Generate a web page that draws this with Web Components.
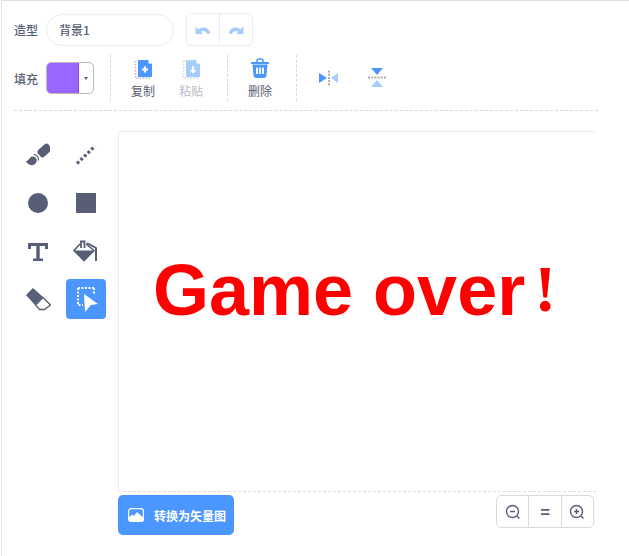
<!DOCTYPE html>
<html lang="zh">
<head>
<meta charset="utf-8">
<title>造型</title>
<style>
  body { margin: 0; background: #fff; font-family: "Noto Sans CJK SC", "Liberation Sans", sans-serif; color: #575e75; }
</style>
</head>
<body>
<paint-editor>
  <name-row slot="name" label="造型" value="背景1"></name-row>
  <edit-bar slot="bar"></edit-bar>
  <tool-box slot="tools"></tool-box>
  <bitmap-canvas slot="canvas">Game over<span style="font-family:'Liberation Serif',serif;font-size:66px;margin-left:9px;position:relative;top:-4px">!</span></bitmap-canvas>
  <convert-button slot="convert">转换为矢量图</convert-button>
  <zoom-controls slot="zoom"></zoom-controls>
</paint-editor>

<script>
class PaintEditor extends HTMLElement {
  constructor() {
    super();
    this.attachShadow({mode: 'open'}).innerHTML = `
      <style>
        :host { display: block; box-sizing: border-box; width: 628px; height: 556px; margin-left: 1px; overflow: hidden; border-top: 1px solid #e0e0e0; border-left: 1px solid #e4e4e4; position: relative; }
        .accent { position: absolute; top: -1px; left: 20px; width: 82px; height: 1px; background: #b8c3da; }
        .head { margin-left: 12px; width: 584px; padding-top: 12px; height: 110px; box-sizing: border-box; border-bottom: 1px dashed #d9d9d9; }
        .body { display: flex; margin-top: 20px; margin-left: 16px; }
        .main { width: 478px; }
        .foot { display: flex; justify-content: space-between; padding-top: 3px; width: 476px; }
      </style>
      <div class="accent"></div>
      <div class="head"><slot name="name"></slot><slot name="bar"></slot></div>
      <div class="body">
        <slot name="tools"></slot>
        <div class="main">
          <slot name="canvas"></slot>
          <div class="foot"><slot name="convert"></slot><slot name="zoom"></slot></div>
        </div>
      </div>`;
  }
}

class NameRow extends HTMLElement {
  connectedCallback() {
    this.attachShadow({mode: 'open'}).innerHTML = `
      <style>
        :host { display: flex; align-items: center; height: 33px; font-size: 12px; font-weight: 500; }
        .label { width: 32px; }
        .input { box-sizing: border-box; width: 128px; height: 32px; line-height: 30px; padding-left: 12px; border: 1px solid #e9eef2; border-radius: 16px; }
        .undo { display: flex; margin-left: 12px; height: 33px; box-sizing: border-box; border: 1px solid #e9eef2; border-radius: 5px; }
        .undo span { display: flex; align-items: center; justify-content: center; width: 32px; }
        .undo span + span { border-left: 1px solid #e9eef2; }
        svg { display: block; }
      </style>
      <span class="label">${this.getAttribute('label')}</span>
      <span class="input">${this.getAttribute('value')}</span>
      <div class="undo">
        <span><svg width="18" height="12" viewBox="0 0 18 12"><path d="M1.500 2.500v7.500H9z" fill="#a6ccff"/><path d="M4 7.500c4-3.500 8.500-3 11 2" fill="none" stroke="#a6ccff" stroke-width="3.600"/></svg></span>
        <span><svg width="18" height="12" viewBox="0 0 18 12"><path d="M16.500 2.500v7.500H9z" fill="#a6ccff"/><path d="M14 7.500c-4-3.500-8.500-3-11 2" fill="none" stroke="#a6ccff" stroke-width="3.600"/></svg></span>
      </div>`;
  }
}

class EditBar extends HTMLElement {
  constructor() {
    super();
    this.attachShadow({mode: 'open'}).innerHTML = `
      <style>
        :host { display: flex; align-items: center; height: 46px; margin-top: 9px; font-size: 12px; }
        .label { width: 32px; font-weight: 500; }
        .fill { display: flex; box-sizing: border-box; width: 48px; height: 32px; border: 1px solid #b9b9c2; border-radius: 5px; overflow: hidden; }
        .swatch { width: 31px; background: #9966ff; border-right: 1px solid #7a49d6; }
        .caret { flex: 1; display: flex; align-items: center; justify-content: center; }
        .caret i { border: 2.500px solid transparent; border-top: 3px solid #575e75; border-bottom: 0; }
        .sep { height: 46px; width: 0; border-left: 1px dashed #d9d9d9; margin: 0 8px 0 16px; }
        .sep.next { margin-left: 12px; }
      </style>
      <span class="label">填充</span>
      <div class="fill"><div class="swatch"></div><div class="caret"><i></i></div></div>
      <div class="sep"></div>
      <bar-action label="复制"><svg width="24" height="24" viewBox="0 0 24 24"><path d="M7 3h10l4 4v13H7z" fill="#4c97ff"/><path d="M17.500 3l3.500 3.500h-3.500z" fill="#fff"/><path d="M14 9.500v6M11 12.500h6" stroke="#fff" stroke-width="2.200"/><path d="M4.500 4v17h15" fill="none" stroke="#b5bac6" stroke-width="1.500" stroke-dasharray="1.500 1.500"/></svg></bar-action>
      <bar-action label="粘贴" muted><svg width="24" height="24" viewBox="0 0 24 24"><path d="M7 3h10l4 4v13H7z" fill="#a6ccff"/><path d="M17.500 3l3.500 3.500h-3.500z" fill="#fff"/><path d="M14 9v5" stroke="#fff" stroke-width="2.200"/><path d="M10.800 13h6.400L14 16.800z" fill="#fff"/><path d="M4.500 4v17h15M4.500 4h10" fill="none" stroke="#d5d8df" stroke-width="1.500" stroke-dasharray="1.500 1.500"/></svg></bar-action>
      <div class="sep next"></div>
      <bar-action label="删除"><svg width="24" height="24" viewBox="0 0 24 24"><path d="M9 5V3.800A1.800 1.800 0 0 1 10.800 2h2.400A1.800 1.800 0 0 1 15 3.800V5" fill="none" stroke="#4c97ff" stroke-width="1.600"/><path d="M3 5h18v2H3z" fill="#4c97ff"/><path d="M4.500 7.500h15l-1 10.500a3 3 0 0 1-3 3h-7a3 3 0 0 1-3-3z" fill="#4c97ff"/><path d="M9 10.500v6.500M12 10.500v6.500M15 10.500v6.500" stroke="#fff" stroke-width="1.800"/></svg></bar-action>
      <div class="sep next"></div>
      <bar-action><svg width="24" height="24" viewBox="0 0 24 24"><path d="M2 7l8 5-8 5z" fill="#4c97ff"/><path d="M21 7l-7 5 7 5z" fill="#a6ccff"/><path d="M12 4.500v15" stroke="#a9adb8" stroke-width="2" stroke-dasharray="2 1.200"/></svg></bar-action>
      <bar-action><svg width="24" height="24" viewBox="0 0 24 24"><path d="M6 2h12l-6 7z" fill="#4c97ff"/><path d="M6 21h12l-6-7z" fill="#a6ccff"/><path d="M3 11.500h18" stroke="#a9adb8" stroke-width="2" stroke-dasharray="2 1.200"/></svg></bar-action>`;
  }
}

class BarAction extends HTMLElement {
  connectedCallback() {
    const label = this.getAttribute('label');
    this.attachShadow({mode: 'open'}).innerHTML = `
      <style>
        :host { display: flex; flex-direction: column; align-items: center; width: 48px; height: 46px; box-sizing: border-box; padding-top: 2px; color: #575e75; }
        :host([muted]) { color: #b8bbc5; }
        .noLabel { padding-top: 9px; }
        span { font-size: 12px; line-height: 18px; margin-top: 1px; }
        ::slotted(svg) { display: block; }
      </style>
      <div class="${label ? '' : 'noLabel'}"><slot></slot></div>
      ${label ? `<span>${label}</span>` : ''}`;
  }
}

class ToolBox extends HTMLElement {
  constructor() {
    super();
    this.attachShadow({mode: 'open'}).innerHTML = `
      <style>
        :host { display: grid; grid-template-columns: 40px 40px; grid-auto-rows: 40px; gap: 8px; width: 100px; height: 184px; padding-top: 4px; }
      </style>
      <tool-button><svg width="24" height="24" viewBox="0 0 24 24"><rect x="11.500" y="3" width="14" height="9" rx="3" transform="rotate(-42 18.500 7.500)" fill="#575e75"/><path d="M0 18c3 .5 3.500-5 7-4.500 3 .5 4.500 3 3.500 5.500-1 2.500-3.500 3.500-6 3-1.500-.3-4-2-4.500-4z" fill="#575e75"/><path d="M7.500 11.500a5 5 0 0 1 5 6" fill="none" stroke="#575e75" stroke-width="1.200"/></svg></tool-button>
      <tool-button><svg width="24" height="24" viewBox="0 0 24 24"><path d="M3 20.500L21 3" stroke="#575e75" stroke-width="3.200" stroke-dasharray="2.800 2.200"/></svg></tool-button>
      <tool-button><svg width="24" height="24" viewBox="0 0 24 24"><circle cx="12" cy="12" r="10" fill="#575e75"/></svg></tool-button>
      <tool-button><svg width="24" height="24" viewBox="0 0 24 24"><rect x="2" y="2" width="20" height="20" fill="#575e75"/></svg></tool-button>
      <tool-button><svg width="24" height="24" viewBox="0 0 24 24"><path d="M2 4h20v6h-3V7h-5.300v12.500H17V22H7v-2.500h3.300V7H5v3H2z" fill="#575e75"/></svg></tool-button>
      <tool-button><svg width="26" height="24" viewBox="0 0 26 24"><path d="M8 9V2.500h3.500V9" fill="none" stroke="#575e75" stroke-width="1.800"/><path d="M7 5L1 11.500l10 10L21 11.500 13 5" fill="none" stroke="#575e75" stroke-width="1.600"/><path d="M1.500 11.500h19.500L11 22z" fill="#575e75"/><path d="M14 4l9 5v13" stroke="#575e75" stroke-width="2" fill="none"/></svg></tool-button>
      <tool-button><svg width="26" height="24" viewBox="0 0 26 24"><path d="M1 8L8 1l10 9-8 8z" fill="#575e75"/><path d="M10.500 18l7.500-7.500 7.500 7.500-6 4.500h-5z" fill="#fff" stroke="#575e75" stroke-width="1.400"/></svg></tool-button>
      <tool-button selected><svg width="32" height="32" viewBox="0 0 32 32"><path d="M8 5h16M8 5v17h5M24 5v6" fill="none" stroke="#fff" stroke-width="2" stroke-dasharray="2 1.500"/><path d="M14 11l14 10-7 1-6 7z" fill="#fff"/></svg></tool-button>`;
  }
}

class ToolButton extends HTMLElement {
  constructor() {
    super();
    this.attachShadow({mode: 'open'}).innerHTML = `
      <style>
        :host { display: flex; align-items: center; justify-content: center; width: 40px; height: 40px; border-radius: 4px; }
        :host([selected]) { background: #4c97ff; }
        ::slotted(svg) { display: block; }
      </style>
      <slot></slot>`;
  }
}

class BitmapCanvas extends HTMLElement {
  constructor() {
    super();
    this.attachShadow({mode: 'open'}).innerHTML = `
      <style>
        :host { display: flex; align-items: baseline; box-sizing: border-box; width: 478px; height: 361px; border-top: 1px solid #eceef1; border-left: 1px solid #eceef1; border-bottom: 1px dashed #dedede; padding: 113px 0 0 34px; font: bold 72px/90px "Liberation Sans", sans-serif; color: #ff0000; white-space: pre; }
      </style>
      <slot></slot>`;
  }
}

class ConvertButton extends HTMLElement {
  constructor() {
    super();
    this.attachShadow({mode: 'open'}).innerHTML = `
      <style>
        :host { display: flex; align-items: center; box-sizing: border-box; width: 116px; height: 40px; padding-left: 10px; background: #4c97ff; border-radius: 5px; color: #fff; font-size: 12px; font-weight: 700; }
        svg { display: block; margin-right: 10px; }
      </style>
      <svg width="16" height="14" viewBox="0 0 16 14"><rect x=".6" y=".6" width="14.800" height="12.800" rx="2.500" fill="none" stroke="#fff" stroke-width="1.200"/><path d="M0.500 10l3.500-3.500 2 1.500 3-4 6.500 6v2a2 2 0 0 1-2 2h-11a2 2 0 0 1-2-2z" fill="#fff"/></svg>
      <slot></slot>`;
  }
}

class ZoomControls extends HTMLElement {
  constructor() {
    super();
    this.attachShadow({mode: 'open'}).innerHTML = `
      <style>
        :host { display: flex; box-sizing: border-box; width: 98px; height: 33px; border: 1px solid #d9d9d9; border-radius: 5px; }
        span { display: flex; align-items: center; justify-content: center; width: 32px; }
        span + span { border-left: 1px solid #d9d9d9; }
        svg { display: block; }
      </style>
      <span><svg width="16" height="16" viewBox="0 0 16 16"><circle cx="7.500" cy="7.500" r="6" fill="none" stroke="#575e75" stroke-width="1.400"/><path d="M5 7.500h5" stroke="#575e75" stroke-width="1.500"/><path d="M12 12l2.500 2.500" stroke="#575e75" stroke-width="1.400"/></svg></span>
      <span><svg width="16" height="16" viewBox="0 0 16 16"><path d="M4 5.800h8.500M4 10.200h8.500" stroke="#575e75" stroke-width="1.800"/></svg></span>
      <span><svg width="16" height="16" viewBox="0 0 16 16"><circle cx="7.500" cy="7.500" r="6" fill="none" stroke="#575e75" stroke-width="1.400"/><path d="M5 7.500h5M7.500 5v5" stroke="#575e75" stroke-width="1.500"/><path d="M12 12l2.500 2.500" stroke="#575e75" stroke-width="1.400"/></svg></span>`;
  }
}

customElements.define('paint-editor', PaintEditor);
customElements.define('name-row', NameRow);
customElements.define('edit-bar', EditBar);
customElements.define('bar-action', BarAction);
customElements.define('tool-box', ToolBox);
customElements.define('tool-button', ToolButton);
customElements.define('bitmap-canvas', BitmapCanvas);
customElements.define('convert-button', ConvertButton);
customElements.define('zoom-controls', ZoomControls);
</script>
</body>
</html>
